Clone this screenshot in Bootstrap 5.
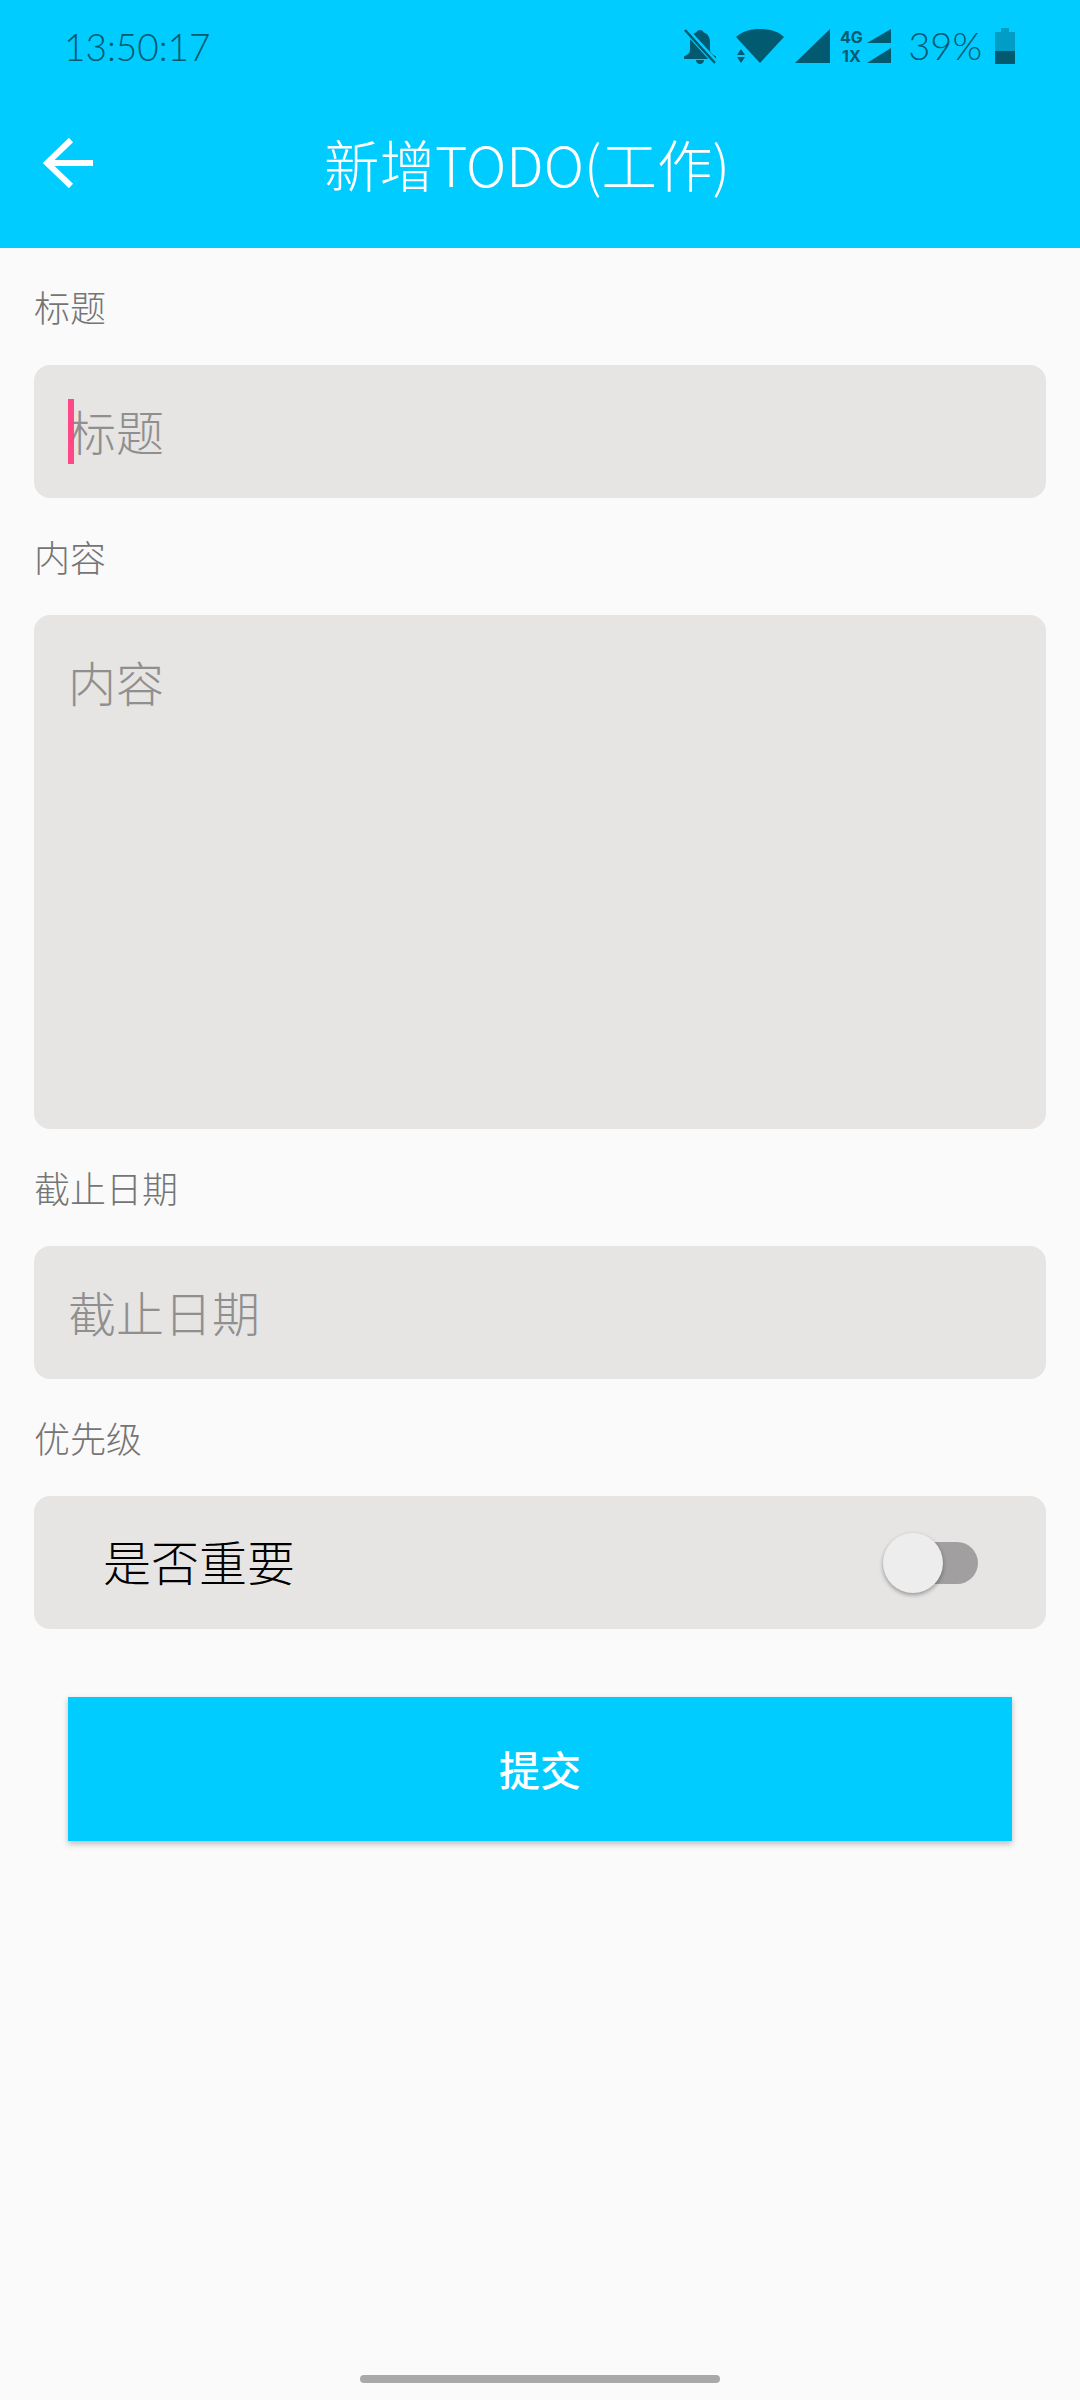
<!DOCTYPE html>
<html>

<head>
  <title>新增TODO</title>
  <link href="https://cdn.jsdelivr.net/npm/bootstrap@5.3.2/dist/css/bootstrap.min.css" rel="stylesheet">
  <script src="https://cdn.jsdelivr.net/npm/bootstrap@5.3.2/dist/js/bootstrap.bundle.min.js"></script>
  <style>
    body {
      background: #fafafa;
      font-family: "Noto Sans CJK SC", "Noto Sans", sans-serif;
      height: 2400px;
      overflow: hidden;
    }

    .top-area {
      background: #00ccff;
      height: 248px;
    }

    .status-row {
      height: 96px;
      padding: 0 64px 0 64px;
      color: #015a70;
    }

    .status-icons {
      margin-top: -5px;
    }

    .clock {
      font-family: Lato, sans-serif;
      font-weight: 300;
      font-size: 37px;
      margin-top: -3px;
    }

    .battery-text {
      font-family: Lato, sans-serif;
      font-weight: 300;
      font-size: 38px;
      margin: 0 12px 0 16px;
    }

    .bell-icon {
      margin-right: 18px;
    }

    .wifi-icon {
      margin-right: 11px;
    }

    .signal-icon {
      margin-right: 9px;
    }

    .network-icon {
      overflow: visible;
    }

    .app-row {
      height: 152px;
      color: #fff;
      padding-left: 43px;
    }

    .back-icon {
      margin-top: -18px;
    }

    .app-title {
      font-size: 55.5px;
      font-weight: 300;
      margin-left: 231px;
      line-height: 1;
      margin-top: -16px;
    }

    .form-area {
      padding: 0 34px;
    }

    .field-label {
      color: #757575;
      font-size: 36px;
      font-weight: 300;
      line-height: 36px;
      margin: 0;
      padding: 40px 0 0;
      height: 117px;
    }

    .field-label.next {
      height: 117px;
      padding-top: 40px;
    }

    .todo-input.form-control {
      background: #e6e5e4;
      border: 0;
      border-radius: 16px;
      color: #333;
      font-size: 48px;
      font-weight: 300;
      height: 133px;
      padding: 0 34px 4px;
      box-shadow: none;
    }

    textarea.todo-input.form-control {
      height: 514px;
      padding-top: 30px;
      resize: none;
    }

    .todo-input.form-control::placeholder {
      color: #8f8f8f;
      opacity: 1;
    }

    .title-wrap {
      position: relative;
    }

    .caret-bar {
      position: absolute;
      left: 34px;
      top: 34px;
      width: 6px;
      height: 65px;
      background: #ff4081;
      opacity: .95;
    }

    .important-row {
      background: #e6e5e4;
      border-radius: 16px;
      height: 133px;
      padding: 0 68px 0 69px;
      font-size: 48px;
      font-weight: 300;
      color: #000;
    }

    .important-text {
      margin-top: -5px;
    }

    .switch-track {
      position: relative;
      width: 90px;
      height: 42px;
      border-radius: 21px;
      background: #a19f9f;
    }

    .switch-thumb {
      position: absolute;
      left: -5px;
      top: -9px;
      width: 60px;
      height: 60px;
      border-radius: 50%;
      background: #ededed;
      box-shadow: 0 2px 4px rgba(0, 0, 0, .35);
    }

    .submit-btn.btn {
      display: block;
      width: 944px;
      height: 144px;
      margin: 68px 0 0 34px;
      padding-bottom: 7px;
      background: #00ccff;
      border: 0;
      border-radius: 0;
      color: #fff;
      font-size: 41px;
      font-weight: 500;
      box-shadow: 0 3px 6px rgba(0, 0, 0, .25);
    }

    .home-pill {
      position: absolute;
      left: 360px;
      top: 2375px;
      width: 360px;
      height: 8px;
      border-radius: 4px;
      background: #a9a9a9;
    }
  </style>
</head>

<body>
  <header class="top-area">
    <div class="status-row d-flex align-items-center">
      <span class="clock">13:50:17</span>
      <div class="status-icons d-flex align-items-center ms-auto">
        <svg width="36" height="36" viewBox="0 0 36 36" fill="#015a70" class="bell-icon">
          <path d="M18 2c-1.500 0-3 .8-3.500 2.200C10 5.800 8 9.500 8 14v8c0 2.500-2 4.500-6 6.500V31h32v-2.500c-4-2-6-4-6-6.500v-8c0-4.500-2-8.200-6.500-9.800C21 2.800 19.500 2 18 2z" />
          <path d="M14 32h8c0 2.500-1.800 4-4 4s-4-1.500-4-4z" />
          <path d="M3 1l31 34" stroke="#00ccff" stroke-width="6" />
          <path d="M3 2l30 33" stroke="#015a70" stroke-width="2.500" />
        </svg>
        <svg width="48" height="36" viewBox="0 0 48 36" fill="#015a70" class="wifi-icon">
          <path d="M0 9C6 3.500 14 1 24 1s18 2.500 24 8L24 35z" />
          <path d="M1 27l4-6 4 6zM1 29h8l-4 6z" />
        </svg>
        <svg width="36" height="36" viewBox="0 0 36 36" fill="#015a70" class="signal-icon">
          <path d="M0 35L35 1v34z" />
        </svg>
        <svg class="network-icon" width="52" height="36" viewBox="0 0 52 36" fill="#015a70">
          <text x="0" y="15" font-family="Inter, sans-serif" font-weight="700" font-size="16">4G</text>
          <text x="2" y="34" font-family="Inter, sans-serif" font-weight="700" font-size="16">1X</text>
          <path d="M27 15L51 1v14zM27 35L51 20v15z" />
        </svg>
        <span class="battery-text">39%</span>
        <svg width="22" height="36" viewBox="0 0 22 36">
          <path d="M7 0h8v4h6v32H1V4h6z" fill="#019dc4" />
          <path d="M1 23h20v13H1z" fill="#015a70" />
        </svg>
      </div>
    </div>
    <div class="app-row d-flex align-items-center">
      <svg class="back-icon flex-shrink-0" width="50" height="50" viewBox="0 0 50 50" fill="none" stroke="#fff" stroke-width="6">
        <path d="M50 25H5M28 2L4 25l24 23" />
      </svg>
      <div class="app-title">新增TODO(工作)</div>
    </div>
  </header>

  <form class="form-area">
    <label class="field-label d-block" for="todoTitle">标题</label>
    <div class="title-wrap">
      <input id="todoTitle" type="text" class="form-control todo-input" placeholder="标题">
      <span class="caret-bar"></span>
    </div>

    <label class="field-label next d-block" for="todoContent">内容</label>
    <textarea id="todoContent" class="form-control todo-input" placeholder="内容"></textarea>

    <label class="field-label next d-block" for="todoDate">截止日期</label>
    <input id="todoDate" type="text" class="form-control todo-input" placeholder="截止日期">

    <label class="field-label next d-block">优先级</label>
    <div class="important-row d-flex align-items-center justify-content-between">
      <span class="important-text">是否重要</span>
      <div class="switch-track"><span class="switch-thumb"></span></div>
    </div>

    <button type="button" class="btn submit-btn">提交</button>
  </form>

  <div class="home-pill"></div>
</body>

</html>
